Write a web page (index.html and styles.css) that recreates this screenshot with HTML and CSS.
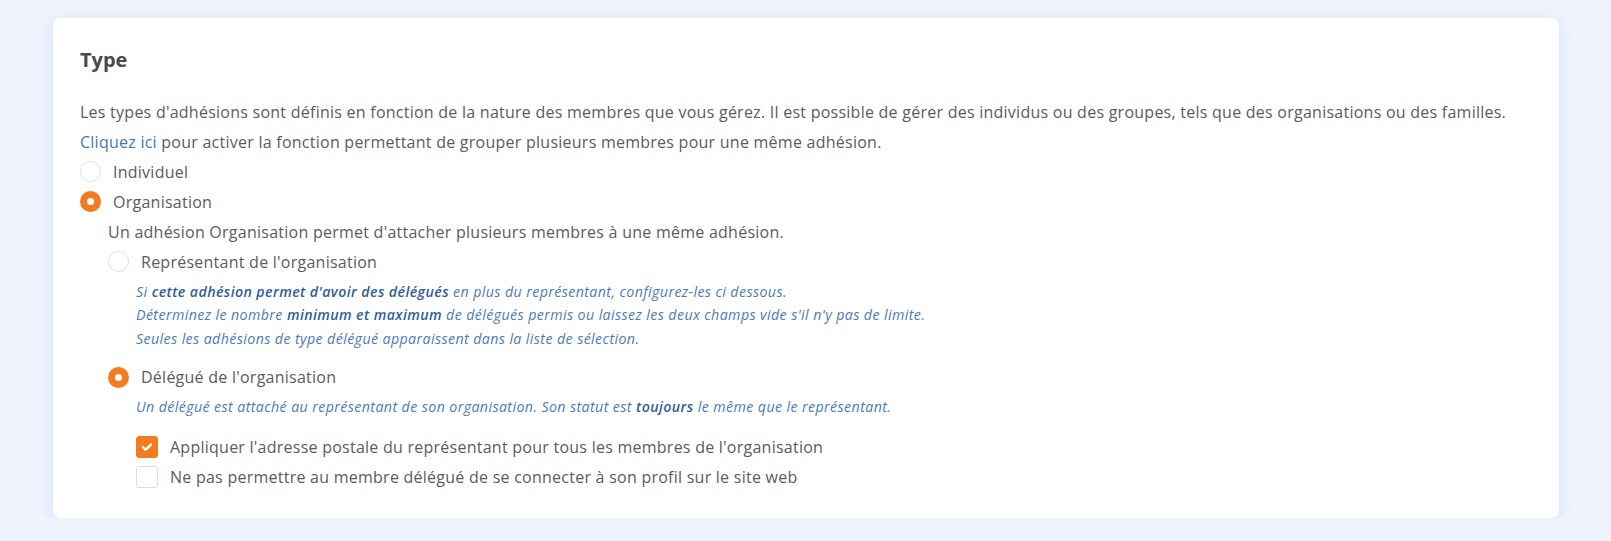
FILE: index.html
```html
<!DOCTYPE html>
<html lang="fr">
<head>
  <meta charset="UTF-8" />
  <title>Type d'adhésion</title>
  <link rel="stylesheet" href="styles.css">
</head>
<body>

  <!-- Type de membre -->
  <div class="card">
    <h2>Type</h2>

    <p class="intro">
      Les types d'adhésions sont définis en fonction de la nature des membres que vous gérez. Il est possible de gérer des individus ou des groupes, tels que des organisations ou des familles.<br>
      <a href="#">Cliquez ici</a> pour activer la fonction permettant de grouper plusieurs membres pour une même adhésion.
    </p>

    <label class="option">
      <input type="radio" name="type" value="individuel">
      <span>Individuel</span>
    </label>
    <label class="option">
      <input type="radio" name="type" value="organisation" checked>
      <span>Organisation</span>
    </label>

    <div class="sub">
      <p class="sub-intro">Un adhésion Organisation permet d'attacher plusieurs membres à une même adhésion.</p>

      <label class="option">
        <input type="radio" name="role" value="representant">
        <span>Représentant de l'organisation</span>
      </label>
      <div class="help">
        Si <b>cette adhésion permet d'avoir des délégués</b> en plus du représentant, configurez-les ci dessous.<br>
        Déterminez le nombre <b>minimum et maximum</b> de délégués permis ou laissez les deux champs vide s'il n'y pas de limite.<br>
        Seules les adhésions de type délégué apparaissent dans la liste de sélection.
      </div>

      <label class="option role-delegue">
        <input type="radio" name="role" value="delegue" checked>
        <span>Délégué de l'organisation</span>
      </label>
      <div class="help">
        Un délégué est attaché au représentant de son organisation. Son statut est <b>toujours</b> le même que le représentant.
      </div>

      <div class="checks">
        <label class="option">
          <input type="checkbox" checked>
          <span>Appliquer l'adresse postale du représentant pour tous les membres de l'organisation</span>
        </label>
        <label class="option">
          <input type="checkbox">
          <span>Ne pas permettre au membre délégué de se connecter à son profil sur le site web</span>
        </label>
      </div>
    </div>
  </div>

</body>
</html>
```

FILE: styles.css
```css
body {
  font-family: "Open Sans", "Liberation Sans", sans-serif;
  margin: 0;
  background: #eef3fd;
  color: #5b5b5b;
}

.card {
  margin: 18px 52px 0 53px;
  padding: 30px 27px 26px;
  background: #fff;
  border-radius: 7px;
  box-shadow: 0 4px 14px rgba(150, 170, 225, 0.28);
}

h2 {
  margin: 0;
  font-size: 20px;
  line-height: 24px;
  font-weight: 700;
  color: #4a4a4a;
}

.intro {
  margin: 24.5px 0 0;
  font-size: 16px;
  letter-spacing: 0.25px;
  line-height: 30px;
}

.intro a {
  color: #3f79b6;
  text-decoration: none;
}

.option {
  display: flex;
  align-items: center;
  gap: 12px;
  height: 30px;
  font-size: 16px;
  letter-spacing: 0.25px;
  cursor: pointer;
}

.option input {
  appearance: none;
  -webkit-appearance: none;
  margin: 0;
  flex: none;
  background: #fff;
  border: 1.5px solid #d9dde4;
}

.option input[type="radio"] {
  width: 21px;
  height: 21px;
  border-radius: 50%;
}

.option input[type="radio"]:checked {
  background: #fff;
  border: 7px solid #f57b20;
}

.option input[type="checkbox"] {
  width: 22px;
  height: 22px;
  border-radius: 3px;
}

.option input[type="checkbox"]:checked {
  border-color: #f57b20;
  background: #f57b20 url("data:image/svg+xml;utf8,<svg xmlns='http://www.w3.org/2000/svg' viewBox='0 0 22 22'><path d='M6.6 11.2l3 2.9 5.8-6' fill='none' stroke='white' stroke-width='2.6' stroke-linecap='round' stroke-linejoin='round'/></svg>") center / 100% no-repeat;
}

.sub {
  padding-left: 28px;
}

.sub-intro {
  margin: 0;
  font-size: 16px;
  letter-spacing: 0.25px;
  line-height: 30px;
}

.help {
  margin: 3px 0 0 28px;
  font-size: 14.2px;
  letter-spacing: 0.4px;
  line-height: 23.5px;
  font-style: italic;
  color: #4b7bb5;
}

.help b {
  color: #2e5f98;
  font-weight: 600;
}

.role-delegue {
  margin-top: 12px;
}

.checks {
  margin: 13.5px 0 0 28px;
}
```
